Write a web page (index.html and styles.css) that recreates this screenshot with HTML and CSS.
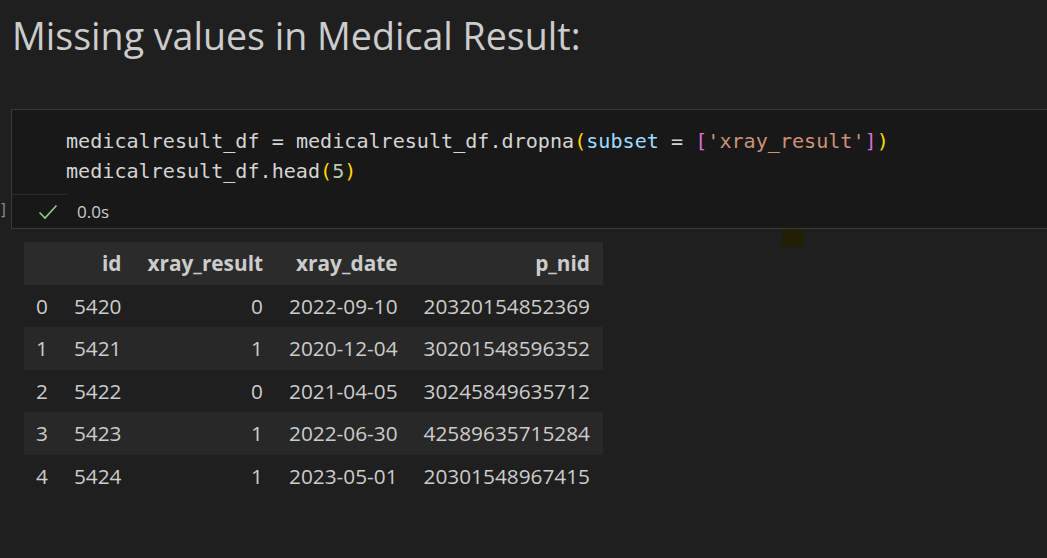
FILE: index.html
```html
<!DOCTYPE html>
<html>
<head>
<meta charset="utf-8">
<link rel="stylesheet" href="styles.css">
</head>
<body>
<h1 class="heading">Missing values in Medical Result:</h1>
<div class="cell">
  <span class="exec-bracket">]</span>
  <div class="code">
    <div class="line"><span class="var">medicalresult_df</span> <span class="op">=</span> <span class="var">medicalresult_df</span>.<span class="fn">dropna</span><span class="p1">(</span><span class="param">subset</span> <span class="op">=</span> <span class="p2">[</span><span class="str">'xray_result'</span><span class="p2">]</span><span class="p1">)</span></div>
    <div class="line"><span class="var">medicalresult_df</span>.<span class="fn">head</span><span class="p1">(</span><span class="num">5</span><span class="p1">)</span></div>
  </div>
  <div class="status">
    <svg class="check" width="20" height="16" viewBox="0 0 20 16"><path d="M1.5 8.5 L7 14 L18.5 1.5" fill="none" stroke="#89d185" stroke-width="1.6"/></svg>
    <span class="time">0.0s</span>
  </div>
  <span class="marker"></span>
</div>
<table class="df">
  <thead>
    <tr><th></th><th>id</th><th>xray_result</th><th>xray_date</th><th>p_nid</th></tr>
  </thead>
  <tbody>
    <tr><td class="idx">0</td><td>5420</td><td>0</td><td>2022-09-10</td><td>20320154852369</td></tr>
    <tr><td class="idx">1</td><td>5421</td><td>1</td><td>2020-12-04</td><td>30201548596352</td></tr>
    <tr><td class="idx">2</td><td>5422</td><td>0</td><td>2021-04-05</td><td>30245849635712</td></tr>
    <tr><td class="idx">3</td><td>5423</td><td>1</td><td>2022-06-30</td><td>42589635715284</td></tr>
    <tr><td class="idx">4</td><td>5424</td><td>1</td><td>2023-05-01</td><td>20301548967415</td></tr>
  </tbody>
</table>
</body>
</html>
```
FILE: styles.css
```css
html, body {
  margin: 0;
  padding: 0;
  background: #1f1f1f;
  width: 1047px;
  height: 558px;
  overflow: hidden;
}
body {
  font-family: "Open Sans", "Noto Sans", sans-serif;
  color: #cccccc;
}
.heading {
  margin: 0;
  padding: 13px 0 0 12px;
  height: 96px;
  box-sizing: border-box;
  font-weight: 400;
  font-size: 37.6px;
  line-height: 46px;
  color: #cccccc;
}
.cell {
  position: relative;
  margin-left: 11px;
  margin-top: 13px;
  border: 1px solid #3a3a3a;
  border-right: none;
  background: #181818;
}
.exec-bracket {
  position: absolute;
  left: -13px;
  top: 91px;
  font-family: "DejaVu Sans Mono", monospace;
  font-size: 15px;
  color: #8a8a8a;
}
.code {
  padding: 16px 0 0 54px;
  height: 84px;
  box-sizing: border-box;
  font-family: "DejaVu Sans Mono", "Liberation Mono", monospace;
  font-size: 20.1px;
  color: #d4d4d4;
}
.line { height: 30px; line-height: 30px; white-space: pre; }
.var { color: #d4d4d4; }
.op { color: #d4d4d4; }
.fn { color: #d4d4d4; }
.param { color: #9cdcfe; }
.p1 { color: #ffd700; }
.p2 { color: #da70d6; }
.str { color: #ce9178; }
.num { color: #b5cea8; }
.status {
  display: flex;
  align-items: center;
  height: 33px;
  border-top: 1px solid #2b2b2b;
  width: 29px;
  padding-left: 26px;
  white-space: nowrap;
}
.check { flex: none; }
.time {
  margin-left: 19px;
  font-size: 17px;
  color: #cccccc;
}
.marker {
  position: absolute;
  left: 770px;
  top: 119px;
  width: 23px;
  height: 18px;
  background: #211f04;
}
.df {
  margin: 13px 0 0 24px;
  border-collapse: collapse;
  font-size: 20.8px;
  color: #cccccc;
}
.df th, .df td {
  padding: 0 13px;
  height: 42.5px;
  text-align: right;
  white-space: nowrap;
}
.df th { font-weight: 700; }
.df thead tr { background: #2b2b2b; }
.df tbody tr:nth-child(odd) { background: #1f1f1f; }
.df tbody tr:nth-child(even) { background: #282828; }
.df td.idx { text-align: left; padding-left: 12px; }
```
